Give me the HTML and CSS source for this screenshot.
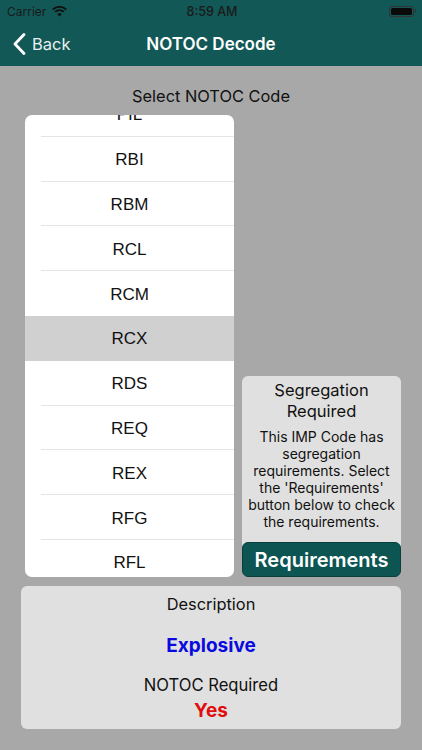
FILE: index.html
```html
<!DOCTYPE html>
<html lang="en">
<head>
<meta charset="utf-8">
<title>NOTOC Decode</title>
<link rel="stylesheet" href="styles.css">
</head>
<body>
<div class="screen">
  <header class="header">
    <div class="status">
      <div class="status-left">
        <span>Carrier</span>
        <svg class="wifi" viewBox="0 0 16 12" width="15" height="11"><path d="M8 11.5 5.6 8.9a3.4 3.4 0 0 1 4.8 0zM3.9 7.2 2.6 5.8a7.7 7.7 0 0 1 10.8 0l-1.3 1.4a5.8 5.8 0 0 0-8.2 0zM1.4 4.7 0 3.2a11.3 11.3 0 0 1 16 0l-1.4 1.5a9.4 9.4 0 0 0-13.2 0z" fill="#111"/></svg>
      </div>
      <div class="status-time">8:59 AM</div>
      <div class="status-right">
        <div class="battery"><div class="battery-fill"></div></div>
        <div class="battery-cap"></div>
      </div>
    </div>
    <div class="nav">
      <div class="back">
        <svg class="chevron" viewBox="0 0 14 22" width="14" height="22"><path d="M12 1.5 3 11l9 9.5" fill="none" stroke="#fff" stroke-width="2.8" stroke-linecap="round" stroke-linejoin="round"/></svg>
        <span>Back</span>
      </div>
      <div class="nav-title">NOTOC Decode</div>
    </div>
  </header>
  <main class="content">
    <div class="heading">Select NOTOC Code</div>
    <div class="columns">
      <div class="picker">
        <div class="picker-track">
          <div class="row">PIL</div>
          <div class="row">RBI</div>
          <div class="row">RBM</div>
          <div class="row">RCL</div>
          <div class="row row-last">RCM</div>
          <div class="row row-selected">RCX</div>
          <div class="row">RDS</div>
          <div class="row">REQ</div>
          <div class="row">REX</div>
          <div class="row">RFG</div>
          <div class="row">RFL</div>
        </div>
      </div>
      <div class="side">
        <div class="seg">
          <div class="seg-title">Segregation Required</div>
          <div class="seg-text">This IMP Code has segregation requirements. Select the 'Requirements' button below to check the requirements.</div>
          <div class="req-btn">Requirements</div>
        </div>
      </div>
    </div>
    <div class="desc">
      <div class="desc-label">Description</div>
      <div class="desc-value">Explosive</div>
      <div class="desc-notoc">NOTOC Required</div>
      <div class="desc-yes">Yes</div>
    </div>
  </main>
</div>
</body>
</html>
```
FILE: styles.css
```css
* { box-sizing: border-box; }
html, body { margin: 0; padding: 0; }
body { width: 422px; height: 750px; overflow: hidden; font-family: Inter, "Liberation Sans", sans-serif; color: #111; background: #a8a8a8; }
.screen { width: 422px; height: 750px; display: flex; flex-direction: column; }
.header { height: 66px; flex: none; background: #125856; }
.status { height: 22px; display: flex; align-items: center; justify-content: space-between; padding: 0 6px 0 7px; font-size: 12px; color: #1a1a1a; position: relative; }
.status-left { display: flex; align-items: center; gap: 6px; }
.status-time { position: absolute; left: 2px; right: 0; text-align: center; font-weight: 500; font-size: 12.5px; }
.status-right { display: flex; align-items: center; gap: 1px; }
.battery { width: 25px; height: 11px; border: 1px solid #333; border-radius: 3px; padding: 1px; }
.battery-fill { width: 100%; height: 100%; background: #0a0a0a; border-radius: 1.5px; }
.battery-cap { width: 1.5px; height: 4px; background: #333; }
.nav { height: 44px; position: relative; display: flex; align-items: center; justify-content: center; color: #fff; }
.back { position: absolute; left: 12px; top: 0; bottom: 0; display: flex; align-items: center; gap: 6px; font-size: 16.5px; color: #e8f0ef; }
.nav-title { font-size: 17px; font-weight: 600; }
.content { flex: 1; display: flex; flex-direction: column; }
.heading { text-align: center; font-size: 16.4px; line-height: 20px; padding-top: 20px; height: 49px; }
.columns { display: flex; height: 462px; padding-left: 25px; gap: 8px; }
.picker { width: 209px; height: 462px; background: #fff; border-radius: 7px; overflow: hidden; }
.picker-track { margin-top: -23px; }
.row { height: 44.8px; display: flex; align-items: center; justify-content: center; padding-top: 2px; font-family: "Liberation Sans", sans-serif; font-size: 17px; position: relative; }
.row::after { content: ""; position: absolute; left: 16px; right: 0; bottom: 0; height: 1px; background: #e4e4e4; }
.row-last::after, .row-selected::after { display: none; }
.row-selected { background: #d0d0d0; }
.side { width: 159px; display: flex; flex-direction: column; justify-content: flex-end; }
.seg { background: #e0e0e0; border-radius: 6px; text-align: center; }
.seg-title { font-size: 16.5px; line-height: 20.5px; padding: 4px 20px 0; }
.seg-text { font-size: 14px; line-height: 17px; padding: 7px 4px 12px; }
.req-btn { background: #0c5553; color: #fff; font-weight: 600; font-size: 20px; height: 35px; line-height: 35px; border-radius: 6px; border: 1px solid #0a3f3d; }
.desc { margin: 9px 21px 0 21px; height: 143px; background: #e0e0e0; border-radius: 6px; text-align: center; }
.desc-label { font-size: 16.4px; line-height: 20px; padding-top: 8px; height: 28px; }
.desc-value { font-size: 19px; font-weight: 700; color: #0a0ae0; line-height: 24px; margin-top: 20px; }
.desc-notoc { font-size: 16.6px; line-height: 20px; margin-top: 17px; }
.desc-yes { font-size: 19px; font-weight: 700; color: #e00f0f; line-height: 24px; margin-top: 4px; }
```
